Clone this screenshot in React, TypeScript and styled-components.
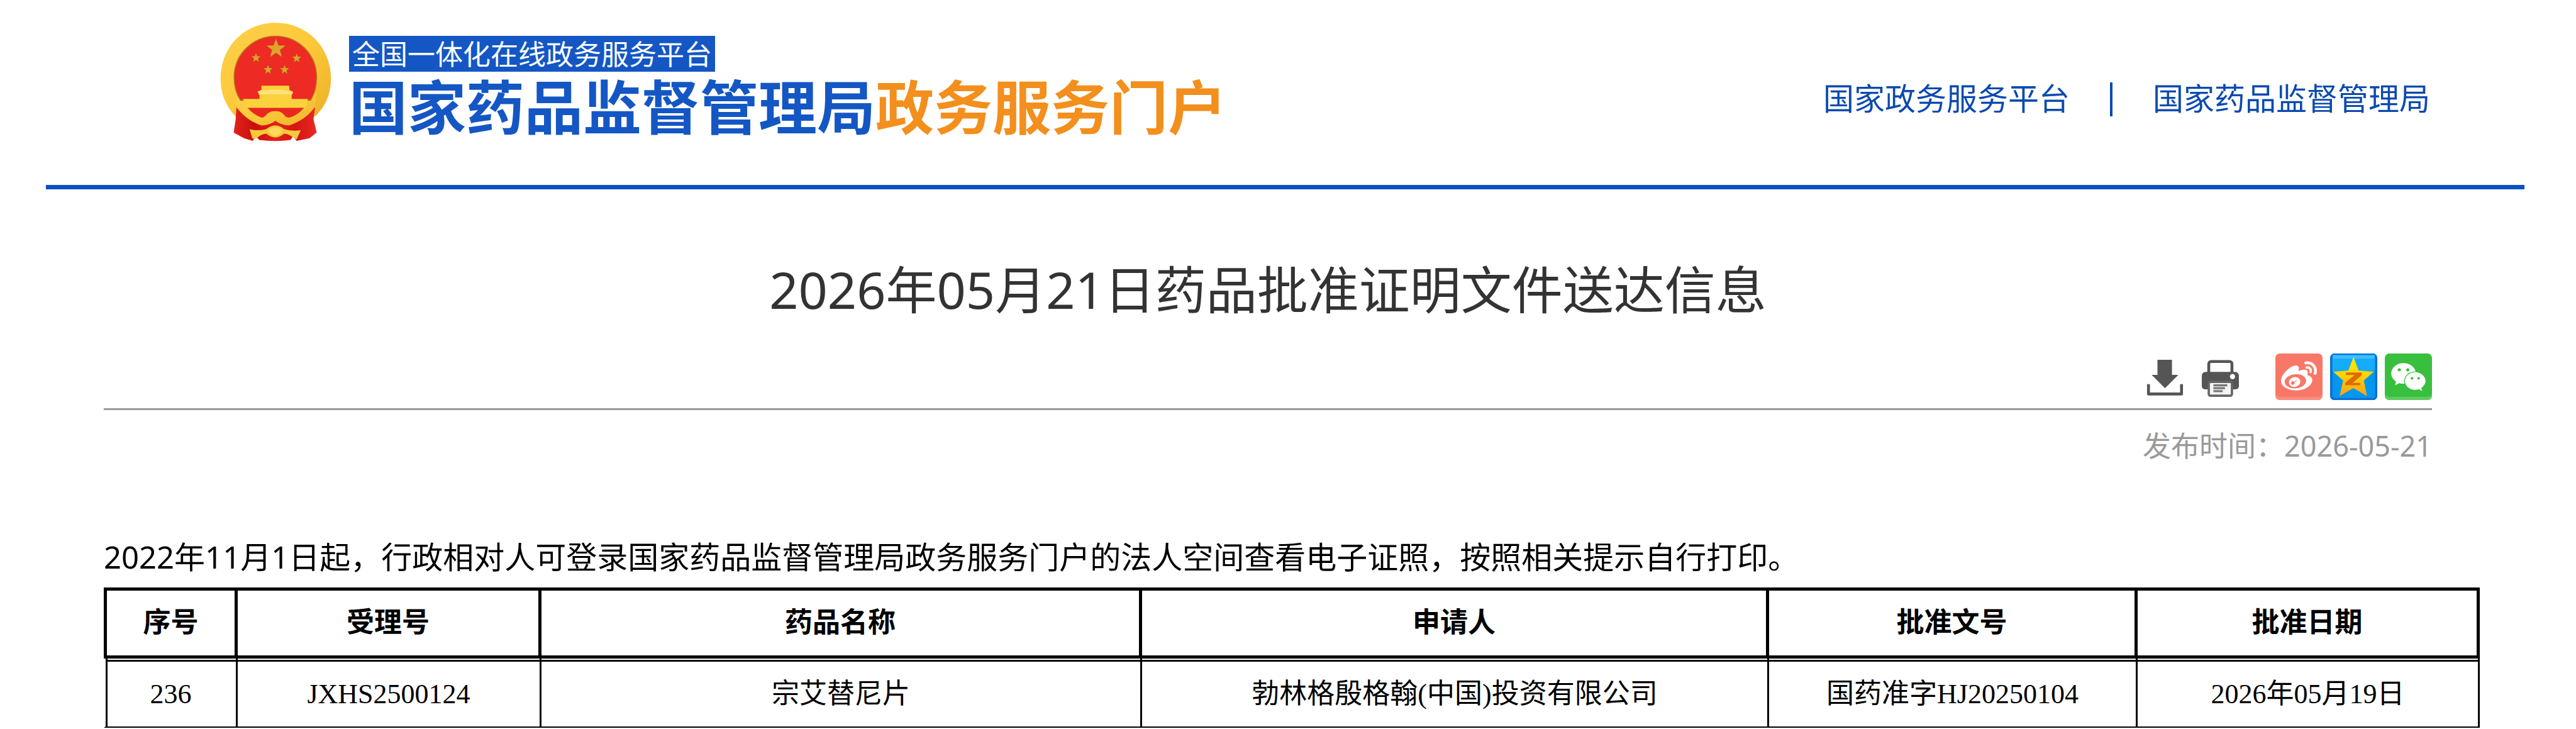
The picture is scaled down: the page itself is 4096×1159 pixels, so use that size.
import React from "react";
import styled, { createGlobalStyle } from "styled-components";
import { FaWeibo, FaWeixin } from "react-icons/fa";

const sans = `"Noto Sans", "Noto Sans CJK SC", sans-serif`;
const cjk = `"Liberation Sans", "Noto Sans CJK SC", sans-serif`;
const song = `"Liberation Serif", "Noto Sans CJK SC", serif`;

const GlobalStyle = createGlobalStyle`
  *, *::before, *::after { box-sizing: border-box; }
  body { margin: 0; background: #fff; color: #000; font-family: ${sans}; }
`;

const Page = styled.div`
  overflow: hidden;
`;

const Header = styled.header`
  display: flex;
  justify-content: space-between;
  align-items: flex-start;
  height: 301px;
  margin: 0 82px 0 73px;
  padding: 36px 150px 0 277px;
  border-bottom: 7px solid #0b50c4;
`;

const Brand = styled.a`
  display: flex;
  align-items: flex-start;
  gap: 28px;
  text-decoration: none;
  font-family: ${cjk};
`;

const Emblem = styled.svg`
  flex: none;
  width: 177px;
  height: 190px;
`;

const BrandText = styled.span`
  display: flex;
  flex-direction: column;
  align-items: flex-start;
  gap: 14px;
  padding-top: 21px;
`;

const Tagline = styled.span`
  padding: 5px 5px 0;
  background: #1457c4;
  color: #fff;
  font-size: 44px;
  line-height: 52px;
  white-space: nowrap;
`;

const SiteName = styled.span`
  color: #1457c4;
  font-size: 93px;
  font-weight: 700;
  line-height: 93px;
  white-space: nowrap;
`;

const Accent = styled.span`
  color: #f38f1c;
`;

const Nav = styled.nav`
  display: flex;
  align-items: center;
  gap: 64px;
  padding-top: 90px;
`;

const NavLink = styled.a`
  color: #0b4ab0;
  font-family: ${cjk};
  font-size: 49px;
  line-height: 64px;
  text-decoration: none;
  white-space: nowrap;
`;

const NavDivider = styled.span`
  width: 4px;
  height: 54px;
  background: #0b4ab0;
`;

const Main = styled.main`
  padding: 118px 153px 0 165px;
`;

const Article = styled.div`
  margin-right: 76px;
`;

const Title = styled.h1`
  margin: 0;
  color: #333;
  font-size: 81px;
  font-weight: 400;
  line-height: 82px;
  text-align: center;
`;

const Toolbar = styled.div`
  display: flex;
  justify-content: flex-end;
  align-items: center;
  margin-top: 61px;
  padding-bottom: 13px;
  border-bottom: 3px solid #999;
`;

const Tools = styled.div`
  display: flex;
  gap: 29px;
  margin-right: 58px;
  padding-top: 4px;
`;

const Shares = styled.div`
  display: flex;
  gap: 12px;
`;

const ToolButton = styled.button`
  display: flex;
  padding: 0;
  border: 0;
  background: none;
  cursor: pointer;

  svg { width: 59px; height: 59px; }
`;

const ShareButton = styled.button<{ $bg: string; $edge: string }>`
  display: flex;
  align-items: center;
  justify-content: center;
  width: 75px;
  height: 74px;
  padding: 0;
  border: 0;
  border-radius: 7px;
  background: ${(p) => p.$bg};
  box-shadow: inset 0 -5px 0 ${(p) => p.$edge};
  color: #fff;
  font-size: 57px;
  cursor: pointer;
`;

const Published = styled.p`
  margin: 0;
  padding-top: 25px;
  color: #999;
  font-size: 45px;
  line-height: 64px;
  text-align: right;
`;

const Notice = styled.p`
  margin: 0;
  padding: 112px 0 17px;
  font-size: 49px;
  line-height: 64px;
`;

const Table = styled.table`
  width: 100%;
  table-layout: fixed;
  border-collapse: separate;
  border-spacing: 0;
  font-family: ${song};
  font-size: 44px;
  line-height: 58px;
  text-align: center;
`;

const Col = styled.col<{ $w: number }>`
  width: ${(p) => p.$w}px;
`;

const Th = styled.th`
  height: 113px;
  padding: 0;
  border: solid #000;
  border-width: 5px 5px 5px 0;
  font-weight: 700;

  &:first-child { border-left-width: 5px; }
`;

/* The rule under the header is doubled: a thin line sits just below the thick one. */
const Td = styled.td`
  height: 110px;
  padding: 5px 0 0;
  border: solid #000;
  border-width: 0 3px 2px 0;
  background: linear-gradient(#000, #000) 0 2px / 100% 3px no-repeat;
  box-shadow: 0 1px 0 #aaa;

  &:first-child {
    border-left: 3px solid #fff;
    box-shadow: inset 3px 0 0 #000, 0 1px 0 #aaa;
  }
`;

const star = (cx: number, cy: number, r: number) =>
  Array.from({ length: 10 }, (_, i) => {
    const a = (Math.PI / 5) * i - Math.PI / 2;
    const d = i % 2 ? r * 0.4 : r;
    return `${(cx + d * Math.cos(a)).toFixed(1)},${(cy + d * Math.sin(a)).toFixed(1)}`;
  }).join(" ");

const NationalEmblem = () => (
  <Emblem viewBox="30 24 560 602" aria-hidden="true">
    <defs>
      <linearGradient id="gold" x1="0" y1="0" x2="1" y2="1">
        <stop offset="0" stopColor="#fdd04a" />
        <stop offset="0.5" stopColor="#fcc93a" />
        <stop offset="1" stopColor="#eeb02a" />
      </linearGradient>
      <linearGradient id="drape" x1="0" y1="0" x2="1" y2="0">
        <stop offset="0" stopColor="#e3211c" />
        <stop offset="0.25" stopColor="#c80f0c" />
        <stop offset="0.5" stopColor="#e3211c" />
        <stop offset="0.75" stopColor="#d41512" />
        <stop offset="1" stopColor="#ea2a22" />
      </linearGradient>
    </defs>
    <path d="M309 25C470 25 588 150 588 305C588 385 560 445 510 495L106 495C60 445 32 385 32 305C32 150 148 25 309 25Z" fill="url(#gold)" />
    <path d="M112 452L508 452L500 510L516 578L480 606L415 620L398 596L384 615Q310 626 226 615L210 596L194 620L150 606L98 578L108 510Z" fill="url(#drape)" />
    <path d="M110 380L112 450Q165 520 240 542Q285 538 308 518Q332 538 376 542Q460 515 506 450L516 380Z" fill="url(#gold)" />
    <path d="M309 92C425 92 516 185 516 300C516 345 504 385 486 415L132 415C112 385 100 345 100 300C100 185 193 92 309 92Z" fill="#ee2a24" stroke="#b5791c" strokeWidth="5" />
    <path d="M168 453L452 453Q420 490 380 502Q358 502 352 488Q335 468 308 470Q280 468 262 488Q254 502 236 502Q195 485 168 453Z" fill="#ea2620" />
    <path d="M145 408H228V390L218 372L238 362V342H378V362L398 374L390 390V408H472L460 450H165Z" fill="#fcd23c" />
    <path d="M220 370Q308 352 396 372L390 385H226Z" fill="#fde27e" />
    <path d="M178 560Q220 572 262 560Q285 542 308 542Q332 542 352 560Q395 572 436 566L415 612L392 598Q375 585 352 583Q330 602 308 602Q285 602 262 583Q235 585 212 608L192 608Z" fill="#f4c93a" />
    <path d="M276 560Q308 545 340 560Q345 585 308 596Q270 585 276 560Z" fill="#fcd95a" />
    {[
      [311, 155, 50],
      [210, 201, 24],
      [415, 203, 24],
      [271, 261, 24],
      [354, 261, 24],
    ].map(([x, y, r]) => (
      <g key={x}>
        <polygon points={star(x + 2, y + 3, r)} fill="#b4611a" />
        <polygon points={star(x, y, r)} fill="#dca52a" />
      </g>
    ))}
  </Emblem>
);

const DownloadIcon = () => (
  <svg viewBox="-1 0 64 64" aria-hidden="true">
    <path d="M18 0H43V26H54L31 49L8 26H18Z" fill="#555" />
    <path d="M2.500 42V59H59.500V42" fill="none" stroke="#555" strokeWidth="5" strokeLinejoin="round" />
  </svg>
);

const PrintIcon = () => (
  <svg viewBox="0 0 64 64" aria-hidden="true">
    <rect x="12" y="3" width="40" height="30" rx="4" fill="#fff" stroke="#555" strokeWidth="5" />
    <path d="M6 21H58Q64 22 64 28V46Q63 51 57 51H7Q1 51 0 46V28Q0 22 6 21Z" fill="#555" />
    <circle cx="53" cy="29" r="4.500" fill="#fff" />
    <rect x="12" y="38" width="40" height="24" rx="3" fill="#f4f4f4" stroke="#666" strokeWidth="4" />
    <path d="M20 44H44M20 49H40M20 54H36" stroke="#777" strokeWidth="3.500" />
  </svg>
);

const QzoneIcon = () => (
  <svg viewBox="0 0 234 234" width="75" height="74" aria-hidden="true">
    <defs>
      <linearGradient id="star" x1="0" y1="0" x2="0" y2="1">
        <stop offset="0" stopColor="#fff000" />
        <stop offset="0.5" stopColor="#ffcf00" />
        <stop offset="1" stopColor="#f9a11b" />
      </linearGradient>
    </defs>
    <rect width="234" height="234" rx="20" fill="#0c6fd0" />
    <rect x="10" y="6" width="214" height="218" rx="10" fill="#0497f0" />
    <path d="M10 6H224V90H10Z" fill="#14acfb" />
    <path d="M14 10H220V26H14Z" fill="#43bdfb" />
    <path d="M116 18L142 86L218 92L168 136L184 214L116 174L46 214L64 136L14 92L90 86Z" fill="url(#star)" />
    <path d="M78 96H158V108L112 148H150V160H74V148L122 108H78Z" fill="#dd6b08" />
  </svg>
);

const columns = [
  { label: "序号", width: 213 },
  { label: "受理号", width: 483 },
  { label: "药品名称", width: 955 },
  { label: "申请人", width: 997 },
  { label: "批准文号", width: 586 },
  { label: "批准日期", width: 544 },
];

const rows = [
  ["236", "JXHS2500124", "宗艾替尼片", "勃林格殷格翰(中国)投资有限公司", "国药准字HJ20250104", "2026年05月19日"],
];

export default function App() {
  return (
    <Page lang="zh-CN">
      <GlobalStyle />
      <Header>
        <Brand href="#">
          <NationalEmblem />
          <BrandText>
            <Tagline>全国一体化在线政务服务平台</Tagline>
            <SiteName>
              国家药品监督管理局<Accent>政务服务门户</Accent>
            </SiteName>
          </BrandText>
        </Brand>
        <Nav>
          <NavLink href="#">国家政务服务平台</NavLink>
          <NavDivider />
          <NavLink href="#">国家药品监督管理局</NavLink>
        </Nav>
      </Header>
      <Main>
        <Article>
          <Title>2026年05月21日药品批准证明文件送达信息</Title>
          <Toolbar>
            <Tools>
              <ToolButton type="button" aria-label="下载"><DownloadIcon /></ToolButton>
              <ToolButton type="button" aria-label="打印"><PrintIcon /></ToolButton>
            </Tools>
            <Shares>
              <ShareButton type="button" aria-label="微博" $bg="#f87867" $edge="#fa8d7f"><FaWeibo /></ShareButton>
              <ShareButton type="button" aria-label="QQ空间" $bg="#0c6fd0" $edge="#0c6fd0"><QzoneIcon /></ShareButton>
              <ShareButton type="button" aria-label="微信" $bg="#39bf3e" $edge="#5fcb62"><FaWeixin /></ShareButton>
            </Shares>
          </Toolbar>
          <Published>发布时间：2026-05-21</Published>
          <Notice>
            2022年11月1日起，行政相对人可登录国家药品监督管理局政务服务门户的法人空间查看电子证照，按照相关提示自行打印。
          </Notice>
        </Article>
        <Table>
          <colgroup>
            {columns.map((c) => <Col key={c.label} $w={c.width} />)}
          </colgroup>
          <thead>
            <tr>{columns.map((c) => <Th key={c.label} scope="col">{c.label}</Th>)}</tr>
          </thead>
          <tbody>
            {rows.map((r) => (
              <tr key={r[0]}>{r.map((v) => <Td key={v}>{v}</Td>)}</tr>
            ))}
          </tbody>
        </Table>
      </Main>
    </Page>
  );
}
